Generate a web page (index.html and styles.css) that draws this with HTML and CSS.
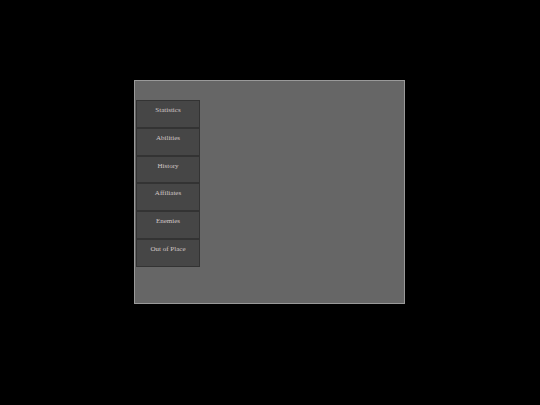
FILE: index.html
```html
<!DOCTYPE html>
<html>
<head>
<meta charset="utf-8">
<link rel="stylesheet" href="styles.css">
</head>
<body>
<div class="panel">
  <nav class="menu">
    <div class="item">Statistics</div>
    <div class="item">Abilities</div>
    <div class="item">History</div>
    <div class="item">Affiliates</div>
    <div class="item">Enemies</div>
    <div class="item">Out of Place</div>
  </nav>
</div>
</body>
</html>
```
FILE: styles.css
```css
html, body {
  margin: 0;
  padding: 0;
  background: #000;
  width: 540px;
  height: 405px;
  overflow: hidden;
}
.panel {
  box-sizing: border-box;
  margin: 80px 0 0 134px;
  width: 271px;
  height: 224px;
  background: #666666;
  border: 1px solid #9a9a9a;
  padding: 19px 0 0 1px;
}
.menu {
  display: flex;
  flex-direction: column;
  width: 64px;
}
.item {
  box-sizing: border-box;
  height: 27.8px;
  background: #464646;
  border: 1px solid #333333;
  color: #d2c6c6;
  font-family: "Liberation Serif", serif;
  font-size: 7px;
  line-height: 8px;
  padding-top: 5px;
  text-align: center;
}
```
